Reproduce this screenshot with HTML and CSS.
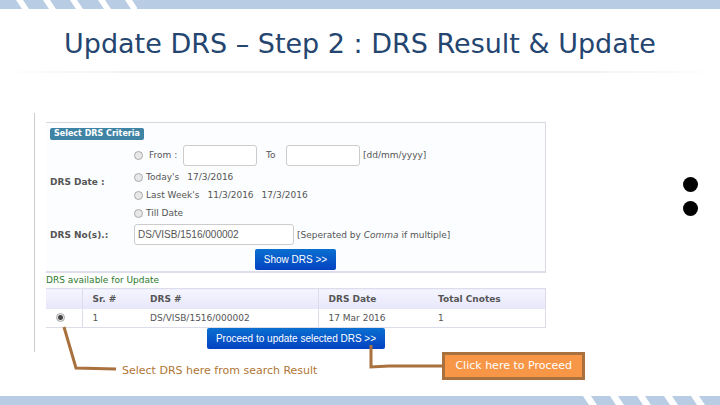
FILE: index.html
```html
<!DOCTYPE html>
<html lang="en">
<head>
  <meta charset="UTF-8">
  <meta name="viewport" content="width=device-width, initial-scale=1.0">
  <title>Update DRS</title>
  <link rel="stylesheet" href="styles.css">
</head>
<body>
  <div class="slide">
    <div class="bar">
      <svg class="stripes" viewBox="0 0 137 9" aria-hidden="true">
        <path d="M16 0h7l6 9h-7zM43 0h7l6 9h-7zM70 0h7l6 9h-7zM98 0h7l6 9h-7zM125 0h7l6 9h-7z"/>
      </svg>
    </div>

    <h1 class="title">Update DRS – Step 2 : DRS Result &amp; Update</h1>
    <div class="divider"></div>

    <main class="content">
      <div class="screen">
        <!-- search criteria -->
        <form class="criteria">
          <h2 class="criteria-title">Select DRS Criteria</h2>
          <div class="field date-field">
            <span class="field-name">DRS Date :</span>
            <div class="options">
              <div class="option range">
                <input type="radio" name="period" id="period-range">
                <label class="from" for="period-range">From :</label>
                <input class="text-box" type="text" aria-label="From date">
                <label class="to" for="date-to">To</label>
                <input class="text-box" type="text" id="date-to">
                <span class="hint">[dd/mm/yyyy]</span>
              </div>
              <div class="option">
                <input type="radio" name="period" id="period-today">
                <label for="period-today">Today's</label>
                <span class="date">17/3/2016</span>
              </div>
              <div class="option">
                <input type="radio" name="period" id="period-week">
                <label for="period-week">Last Week's</label>
                <span class="date">11/3/2016</span>
                <span class="date">17/3/2016</span>
              </div>
              <div class="option">
                <input type="radio" name="period" id="period-till">
                <label for="period-till">Till Date</label>
              </div>
            </div>
          </div>
          <div class="field">
            <label class="field-name" for="drs-no">DRS No(s).:</label>
            <input class="text-box wide" type="text" id="drs-no" value="DS/VISB/1516/000002">
            <span class="hint">[Seperated by <em>Comma</em> if multiple]</span>
          </div>
          <button class="btn" type="button">Show DRS &gt;&gt;</button>
        </form>

        <!-- search result -->
        <p class="available">DRS available for Update</p>
        <table class="result">
          <thead>
            <tr>
              <th class="pick"></th>
              <th class="sr">Sr. #</th>
              <th class="drs">DRS #</th>
              <th class="day">DRS Date</th>
              <th>Total Cnotes</th>
            </tr>
          </thead>
          <tbody>
            <tr>
              <td class="pick"><input type="radio" name="drs" aria-label="Select DRS 1" checked></td>
              <td>1</td>
              <td>DS/VISB/1516/000002</td>
              <td class="day">17 Mar 2016</td>
              <td>1</td>
            </tr>
          </tbody>
        </table>
        <button class="btn" type="button">Proceed to update selected DRS &gt;&gt;</button>
      </div>

      <div class="dots">
        <span class="dot"></span>
        <span class="dot"></span>
      </div>
    </main>

    <!-- notes with their connector lines -->
    <div class="notes">
      <p class="note">
        <svg class="line line-left" viewBox="0 0 56 46" aria-hidden="true">
          <path d="M2 1L14 42L54 43"/>
        </svg>
        Select DRS here from search Result
      </p>
      <p class="callout">
        <svg class="line line-right" viewBox="0 0 76 24" aria-hidden="true">
          <path d="M2 0V22L20 21H76"/>
        </svg>
        Click here to Proceed
      </p>
    </div>

    <div class="bar bar-bottom">
      <svg class="stripes" viewBox="0 0 137 9" aria-hidden="true">
        <path d="M0 0h8l6 9h-8zM27 0h8l6 9h-8zM54 0h8l6 9h-8zM81 0h8l6 9h-8zM108 0h8l6 9h-8z"/>
      </svg>
    </div>
  </div>
</body>
</html>
```

FILE: styles.css
```css
* { box-sizing: border-box; margin: 0; padding: 0; }

body {
  font-family: Verdana, 'DejaVu Sans', sans-serif;
  font-size: 9px;
  color: #555;
  background: #fff;
}

.slide {
  min-height: 100vh;
  display: flex;
  flex-direction: column;
}

.bar {
  height: 9px;
  display: flex;
  background: #b8cce4;
}

.bar-bottom {
  justify-content: flex-end;
  margin-top: auto;
}

.stripes {
  width: 137px;
  height: 9px;
  fill: #fff;
}

.title {
  padding: 18px 0 10px;
  font-size: 27px;
  font-weight: normal;
  line-height: 34px;
  text-align: center;
  color: #24456f;
}

.divider {
  height: 2px;
  background: linear-gradient(to right, #fff, #f0f0f0 20%, #f0f0f0 80%, #fff);
}

.content {
  display: flex;
  padding: 40px 22px 0 34px;
}

.screen {
  flex: 1;
  padding: 9px 0 3px 11px;
  border-left: 1px solid #ccc;
}

/* search criteria */
.criteria {
  padding: 5px 4px 1px;
  background: #fbfdff;
  border-top: 1px solid #d4dadd;
  border-right: 1px solid #d8dce2;
  border-bottom: 2px solid #dedeee;
}

.criteria-title {
  width: fit-content;
  padding: 0 4px;
  border-radius: 2px;
  font-size: 8px;
  line-height: 12px;
  color: #fff;
  background: #3f83a5;
}

.field {
  display: flex;
  align-items: center;
}

.date-field {
  padding: 2px 0;
}

.field-name {
  width: 84px;
  font-weight: bold;
}

.option {
  display: flex;
  align-items: center;
  height: 18px;
}

.range {
  height: 26px;
}

.option label {
  margin-left: 3px;
}

.option .from {
  width: 34px;
  margin-left: 6px;
}

.option .to {
  width: 20px;
  margin-left: 9px;
}

.date {
  margin-left: 8px;
}

.hint {
  margin-left: 3px;
}

.text-box {
  width: 74px;
  height: 21px;
  padding: 0 3px;
  border: 1px solid #ccc;
  border-radius: 3px;
  background: #fff;
  font-family: Arial, 'Liberation Sans', sans-serif;
  font-size: 10px;
  color: #555;
}

.wide {
  width: 160px;
}

input[type="radio"] {
  appearance: none;
  width: 9px;
  height: 9px;
  border: 1px solid #aaa;
  border-radius: 50%;
  background: #e8e8e8;
}

input[type="radio"]:checked {
  background: radial-gradient(circle, #444 2px, #e8e8e8 3px);
}

.btn {
  display: block;
  margin: 0 auto;
  height: 21px;
  padding: 0 9px;
  border: none;
  border-radius: 2px;
  background: linear-gradient(#0a6fd0, #0442c2);
  font-family: Arial, 'Liberation Sans', sans-serif;
  font-size: 10px;
  color: #fff;
  cursor: pointer;
}

.criteria .btn {
  margin-top: 4px;
}

/* search result */
.available {
  line-height: 15px;
  color: #2c7a2c;
}

.result {
  width: 100%;
  border: 1px solid #dcdcea;
  border-left: none;
  border-collapse: collapse;
  table-layout: fixed;
  text-align: left;
}

.result th {
  height: 20px;
  padding-left: 10px;
  background: linear-gradient(#f5f5ff, #e6e6fa);
}

.result td {
  height: 19px;
  padding-left: 10px;
}

.result .pick {
  width: 36px;
  border-right: 1px solid #dcdcea;
}

.result .sr {
  width: 58px;
}

.result .drs {
  width: 178px;
}

.result .day {
  width: 110px;
  border-left: 1px solid #dcdcea;
}

.result input {
  display: block;
}

/* black dots at the right edge */
.dots {
  display: flex;
  flex-direction: column;
  gap: 9px;
  width: 152px;
  padding-top: 64px;
  align-items: flex-end;
}

.dot {
  width: 15px;
  height: 15px;
  border-radius: 50%;
  background: #000;
}

/* notes */
.notes {
  display: flex;
  justify-content: space-between;
  align-items: flex-start;
  padding: 0 135px 0 122px;
}

.note,
.callout {
  position: relative;
  font-size: 11px;
  line-height: 22px;
}

.note {
  padding-top: 8px;
  color: #b07636;
}

.callout {
  padding: 0 10px;
  border: 3px solid #a8713d;
  background: #f79646;
  color: #fff;
}

.line {
  position: absolute;
  fill: none;
  stroke: #a8713d;
  stroke-width: 3;
}

.line-left {
  width: 56px;
  height: 46px;
  top: -26px;
  left: -60px;
}

.line-right {
  width: 76px;
  height: 24px;
  top: -10px;
  left: -76px;
}
```
